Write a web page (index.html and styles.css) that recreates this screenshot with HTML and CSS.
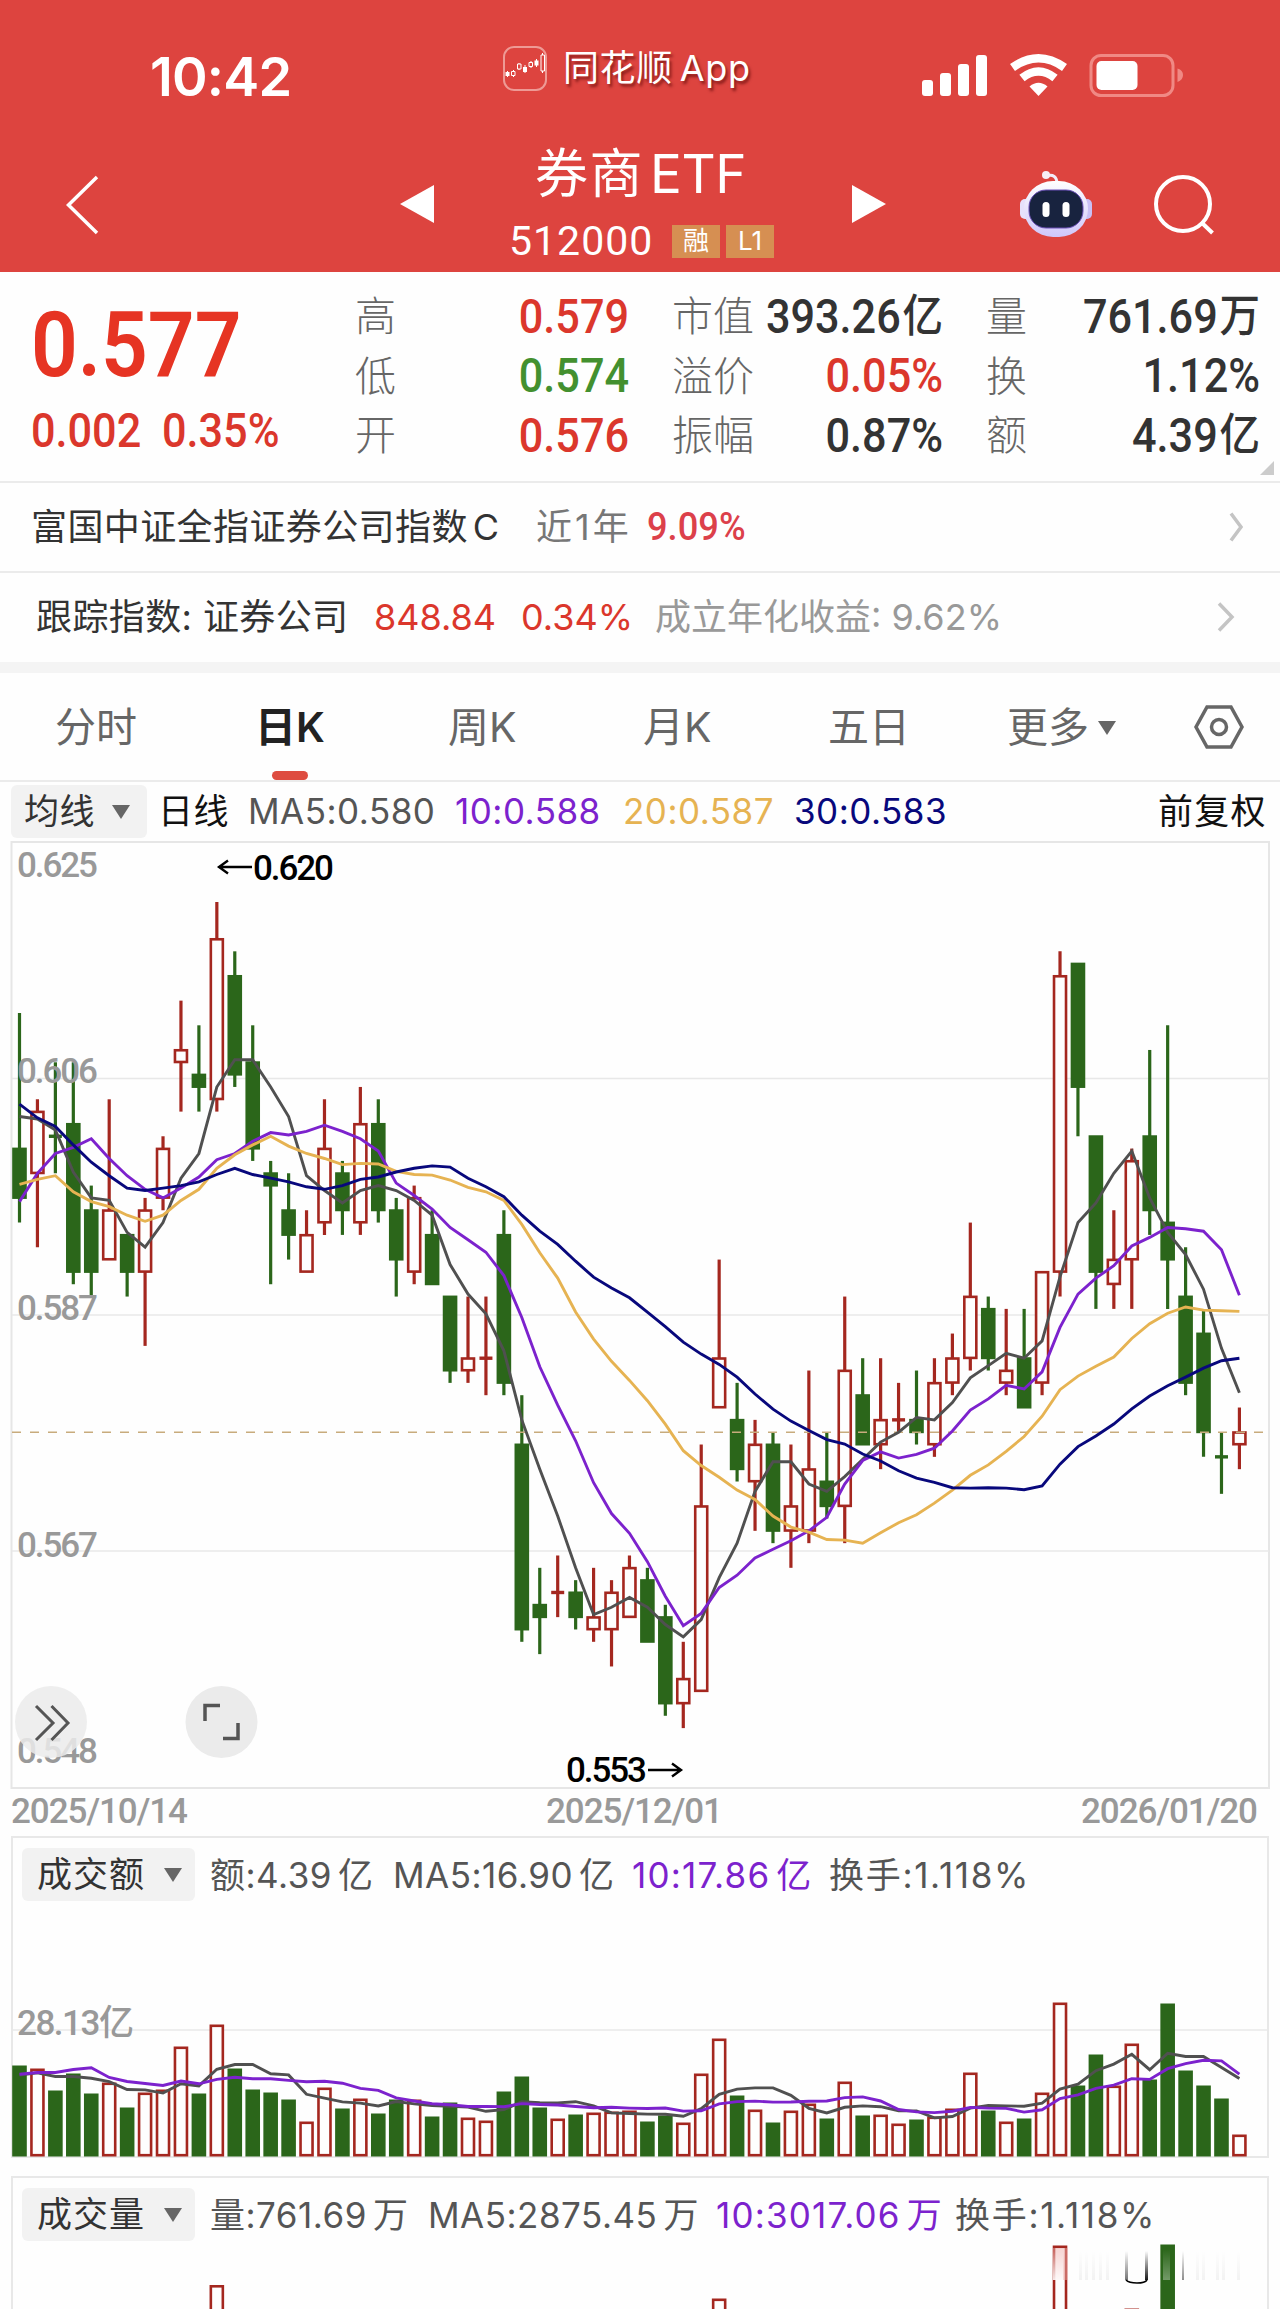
FILE: index.html
```html
<!DOCTYPE html>
<html lang="zh-CN">
<head>
    <meta charset="UTF-8">
    <meta name="viewport" content="width=device-width, initial-scale=1.0">
    <title>券商ETF 512000</title>
    <link rel="stylesheet" href="styles.css">
</head>
<body>
    <header class="header">
        <div class="status-bar">
            <div class="time">10:42</div>
            <div class="app-tag">
                <svg class="app-logo" viewBox="0 0 44 45">
                    <rect x="1" y="1" width="42" height="43" rx="10" fill="none" stroke="#ee9a95" stroke-width="2"/>
                    <path d="M4.500 25v6M10.500 24v7M16 17v7M22 19v8M28 15v7M33.500 13v8M39.500 7v20" stroke="#fff" stroke-width="1"/>
                    <path d="M2.500 26h4v4h-4zM20 21h4v5h-4zM31.500 14.500h4v5h-4z" fill="#fff"/>
                    <path d="M8.500 25.500h3.500v4H8.500zM14.500 18h3.500v5h-3.500zM26 16.500h3.500v4H26zM38 9h3.500v16H38z" fill="#dd443f" stroke="#fff" stroke-width="1"/>
                </svg>
                <span>同花顺<b>App</b></span>
            </div>
            <svg class="status-icons" viewBox="0 0 262 46">
                <g fill="#fff">
                    <rect x="0" y="27" width="11" height="16" rx="3"/>
                    <rect x="18" y="20" width="11" height="23" rx="3"/>
                    <rect x="36" y="11" width="11" height="32" rx="3"/>
                    <rect x="54" y="2" width="11" height="41" rx="3"/>
                </g>
                <g fill="none" stroke="#fff" stroke-width="8.500">
                    <path d="M90.500 14.500Q116.500 -4 142.500 14.500"/>
                    <path d="M100 25Q116.500 12 133 25"/>
                </g>
                <path d="M107.500 33.500Q116.500 26 125.500 33.500L116.500 43z" fill="#fff"/>
                <rect x="169" y="2.500" width="82" height="40" rx="10" fill="none" stroke="#f08984" stroke-width="3"/>
                <path d="M255.500 15.500Q261 17 261 22T255.500 29z" fill="#f08984"/>
                <rect x="174.500" y="8" width="41" height="29" rx="5" fill="#fff"/>
            </svg>
        </div>
        <div class="nav-bar">
            <svg class="back" viewBox="0 0 34 60"><path d="M31 2L2.500 30L31 58" fill="none" stroke="#fff" stroke-width="3.500"/></svg>
            <svg class="prev" viewBox="0 0 34 38"><path d="M34 0V38L0 19z" fill="#fff"/></svg>
            <div class="title">
                <div class="name">券商<span>ETF</span></div>
                <div class="code"><span>512000</span><i>融</i><i>L1</i></div>
            </div>
            <svg class="next" viewBox="0 0 34 38"><path d="M0 0V38L34 19z" fill="#fff"/></svg>
            <svg class="robot" viewBox="0 0 72 66">
                <defs>
                    <linearGradient id="shell" x1="0" y1="0" x2="0" y2="1">
                        <stop offset="0" stop-color="#fff"/>
                        <stop offset="1" stop-color="#cfc6fa"/>
                    </linearGradient>
                </defs>
                <path d="M26 5q11-3 11 8" fill="none" stroke="#f3ecf8" stroke-width="3"/>
                <circle cx="26" cy="4" r="4" fill="#f7eef6"/>
                <rect x="0" y="28" width="12" height="20" rx="5" fill="#e6e0fb"/>
                <rect x="60" y="28" width="12" height="20" rx="5" fill="#c9c0f5"/>
                <rect x="4" y="10" width="64" height="56" rx="29" fill="url(#shell)"/>
                <rect x="9" y="19" width="54" height="38" rx="17" fill="#18233f" stroke="#6a4fb8" stroke-width="1"/>
                <rect x="22.500" y="31" width="7" height="15" rx="3.500" fill="#fff"/>
                <rect x="42.500" y="31" width="7" height="15" rx="3.500" fill="#fff"/>
            </svg>
            <svg class="search" viewBox="0 0 61 60"><circle cx="29" cy="29" r="27" fill="none" stroke="#fff" stroke-width="4"/><path d="M47 47L58.500 58" stroke="#fff" stroke-width="4"/></svg>
        </div>
    </header>

    <section class="quote">
        <div class="last">
            <div class="price">0.577</div>
            <div class="change"><span>0.002</span><span>0.35%</span></div>
        </div>
        <div class="stats">
            <label>高</label><b class="up">0.579</b><label>市值</label><b>393.26<em>亿</em></b><label>量</label><b>761.69<em>万</em></b>
            <label>低</label><b class="down">0.574</b><label>溢价</label><b class="up">0.05%</b><label>换</label><b>1.12%</b>
            <label>开</label><b class="up">0.576</b><label>振幅</label><b>0.87%</b><label>额</label><b>4.39<em>亿</em></b>
        </div>
        <div class="corner"></div>
    </section>

    <a class="row row-fund">
        <span class="fund-name">富国中证全指证券公司指数<span class="cls">C</span></span>
        <span class="muted">近1年</span>
        <b class="din">9.09%</b>
        <svg class="arrow" viewBox="0 0 14 30"><path d="M2 1.500L12 15L2 28.500" fill="none" stroke="#c4c4c4" stroke-width="3.500"/></svg>
    </a>
    <a class="row row-index">
        <span class="index-name">跟踪指数: 证券公司</span>
        <span class="red">848.84</span>
        <span class="red">0.34%</span>
        <span class="muted">成立年化收益: 9.62%</span>
        <svg class="arrow" viewBox="0 0 18 30"><path d="M2 1.500L15 15L2 28.500" fill="none" stroke="#c4c4c4" stroke-width="3.500"/></svg>
    </a>

    <nav class="tabs">
        <span>分时</span>
        <span class="active">日K</span>
        <span>周K</span>
        <span>月K</span>
        <span>五日</span>
        <span class="more">更多<i class="caret"></i></span>
        <svg class="setting" viewBox="0 0 50 44"><path d="M13 2H37L48 22L37 42H13L2 22z" fill="none" stroke="#666" stroke-width="3.500"/><circle cx="25" cy="22" r="7.500" fill="none" stroke="#666" stroke-width="3.500"/></svg>
    </nav>

    <div class="legend">
        <span class="pill">均线<i class="caret"></i></span>
        <span class="black">日线</span>
        <span>MA5:0.580</span>
        <span class="ma10">10:0.588</span>
        <span class="ma20">20:0.587</span>
        <span class="ma30">30:0.583</span>
        <span class="black adjust">前复权</span>
    </div>
    <svg class="kline" id="kline" viewBox="0 840 1280 996"></svg>

    <section class="panel panel-amount">
        <div class="panel-head">
            <span class="pill">成交额<i class="caret"></i></span>
            <span>额:4.39<em>亿</em></span>
            <span>MA5:16.90<em>亿</em></span>
            <span class="ma10">10:17.86<em>亿</em></span>
            <span class="turnover">换手:1.118%</span>
        </div>
        <svg id="amount" viewBox="13 1902 1254 254"></svg>
    </section>

    <section class="panel panel-volume">
        <div class="panel-head">
            <span class="pill">成交量<i class="caret"></i></span>
            <span>量:761.69<em>万</em></span>
            <span>MA5:2875.45<em>万</em></span>
            <span class="ma10">10:3017.06<em>万</em></span>
            <span class="turnover">换手:1.118%</span>
        </div>
        <svg id="volume" viewBox="13 2241 1254 68"></svg>
    </section>

    <script src="chart.js"></script>
</body>
</html>
```
FILE: styles.css
```css
* {
    box-sizing: border-box;
}
body {
    margin: 0;
    width: 1280px;
    height: 2309px;
    overflow: hidden;
    background: #fefefe;
    color: #333;
    font-family: Inter, "Noto Sans CJK SC", sans-serif;
    font-size: 36px;
    line-height: 1;
}
svg {
    display: block;
    flex: none;
}
b, em, i {
    font-style: normal;
    font-weight: inherit;
}

/* header */
.header {
    height: 272px;
    background: #dd443f;
    color: #fff;
}
.status-bar {
    display: flex;
    align-items: center;
    height: 152px;
    padding-left: 150px;
}
.time {
    width: 353px;
    padding-top: 1px;
    font-size: 54px;
    font-weight: 600;
    letter-spacing: -0.800px;
}
.app-tag {
    display: flex;
    align-items: center;
    width: 419px;
    gap: 16px;
    margin-top: -16px;
    font-size: 36px;
    letter-spacing: 0.600px;
    text-shadow: 2px 3px 3px rgba(80, 0, 0, 0.6);
}
.app-tag b {
    margin-left: 7px;
}
.app-logo {
    width: 44px;
    height: 45px;
}
.status-icons {
    width: 262px;
    height: 46px;
}
.nav-bar {
    display: flex;
    height: 120px;
    padding-left: 66px;
}
.back {
    width: 34px;
    height: 60px;
    margin: 23px 300px 0 0;
}
.prev, .next {
    width: 34px;
    height: 38px;
    margin-top: 33px;
}
.title {
    width: 418px;
    text-align: center;
}
.name {
    height: 50px;
    margin-top: -3px;
    padding-right: 5px;
    font-size: 53px;
    line-height: 50px;
    letter-spacing: 1.500px;
    white-space: nowrap;
}
.name span {
    margin-left: 6px;
    letter-spacing: -0.500px;
}
.code {
    display: flex;
    align-items: center;
    height: 34px;
    margin-top: 25px;
    padding-left: 75px;
    font-family: Roboto, sans-serif;
    font-size: 41px;
}
.code span {
    width: 163px;
    text-align: left;
    letter-spacing: 1px;
}
.code i {
    width: 48px;
    height: 33px;
    margin-right: 6px;
    background: #d68f52;
    font-family: Inter, "Noto Sans CJK SC", sans-serif;
    font-size: 26px;
    line-height: 31px;
}
.robot {
    width: 72px;
    height: 66px;
    margin: 19px 62px 0 134px;
}
.search {
    width: 61px;
    height: 60px;
    margin-top: 23px;
}

/* quote */
.quote {
    position: relative;
    display: flex;
    height: 211px;
    border-bottom: 2px solid #ebebeb;
    font-family: Roboto, "Noto Sans CJK SC", sans-serif;
    font-weight: 500;
}
.last {
    width: 355px;
    padding-left: 31px;
    color: #e63423;
}
.price {
    height: 92px;
    margin-top: 27px;
    font-size: 91px;
    font-weight: 600;
    line-height: 92px;
    transform: scaleX(0.9);
    transform-origin: left;
}
.change {
    display: flex;
    margin-top: 16px;
    color: #db372c;
    font-size: 48px;
}
.change span {
    width: 131px;
    transform: scaleX(0.9);
    transform-origin: left;
}
.stats {
    display: grid;
    grid-template-columns: 83px 191px 115px 199px 88px 229px;
    grid-template-rows: repeat(3, 59.500px);
    align-items: center;
    padding-top: 15px;
}
.stats label {
    padding-top: 2px;
    color: #666;
    font-size: 41px;
    font-weight: 300;
    white-space: nowrap;
}
.stats label:nth-child(6n+3), .stats label:nth-child(6n+5) {
    padding-left: 43px;
}
.stats b {
    display: flex;
    align-items: center;
    justify-content: flex-end;
    font-size: 48px;
    white-space: nowrap;
    transform: scaleX(0.9);
    transform-origin: right;
}
.stats em {
    margin-left: 2px;
    font-size: 45px;
}
.up {
    color: #db372c;
}
.down {
    color: #43902f;
}
.corner {
    position: absolute;
    right: 6px;
    bottom: 6px;
    border-left: 14px solid transparent;
    border-bottom: 14px solid #ccc;
}

/* fund / index rows */
.row {
    display: grid;
    align-items: center;
    height: 90px;
    white-space: nowrap;
}
.row-fund {
    grid-template-columns: 505px 111px 582px auto;
    padding-left: 31px;
    border-bottom: 2px solid #ebebeb;
}
.fund-name {
    letter-spacing: 0.400px;
}
.row-fund .muted {
    letter-spacing: 3px;
}
.row-index {
    grid-template-columns: 338px 147px 134px 562px auto;
    height: 89px;
    padding: 0 0 2px 36px;
}
.index-name {
    letter-spacing: 0.400px;
}
.cls {
    margin-left: 5px;
}
.muted {
    color: #777;
}
.row-index .muted {
    color: #999;
}
.red {
    color: #db372c;
}
.din {
    color: #dc404a;
    font-family: Roboto, sans-serif;
    font-size: 39px;
    font-weight: 500;
    transform: scaleX(0.93);
    transform-origin: left;
}
.row-fund .arrow {
    width: 14px;
    height: 30px;
}
.row-index .arrow {
    width: 18px;
    height: 30px;
}

/* tabs */
.tabs {
    display: grid;
    grid-template-columns: 200px 193px 195px 185px 179px 187px auto;
    align-items: center;
    height: 120px;
    padding-left: 55px;
    border-top: 11px solid #f4f4f4;
    border-bottom: 2px solid #ebebeb;
    color: #666;
    font-size: 41px;
}
.tabs span {
    padding-top: 2px;
}
.tabs .active {
    position: relative;
    color: #222;
    font-weight: 600;
}
.tabs .active::after {
    content: "";
    position: absolute;
    left: 17px;
    bottom: -32px;
    width: 36px;
    height: 9px;
    border-radius: 5px;
    background: #de4c40;
}
.caret {
    display: inline-block;
    border: 9px solid transparent;
    border-top: 14px solid #666;
    border-bottom: 0;
}
.more .caret {
    margin-left: 9px;
    vertical-align: 7px;
}
.setting {
    width: 50px;
    height: 44px;
}

/* MA legend */
.legend {
    display: grid;
    grid-template-columns: 147px 90px 207px 168px 171px 364px auto;
    align-items: center;
    height: 59px;
    padding-left: 11px;
    color: #555;
    font-size: 35px;
    letter-spacing: 0.500px;
    white-space: nowrap;
}
.pill {
    display: flex;
    align-items: center;
    justify-content: space-between;
    width: 136px;
    height: 53px;
    padding: 0 17px 0 13px;
    border-radius: 6px;
    background: #f2f2f2;
    color: #333;
}
.black {
    color: #111;
}
.ma10 {
    color: #7c22cd;
}
.ma20 {
    color: #e6b352;
}
.ma30 {
    color: #08087c;
}
.adjust {
    letter-spacing: 1.200px;
}
.kline {
    width: 1280px;
    height: 996px;
    margin-top: -1px;
}

/* sub charts */
.panel {
    margin: 0 11px 18px;
    border: 2px solid #e8e8e8;
}
.panel-head {
    display: grid;
    align-items: center;
    height: 64px;
    padding: 9px 0 0 9px;
    color: #555;
    font-size: 35px;
    letter-spacing: 0.500px;
    white-space: nowrap;
}
.panel-head > span:not(.pill) {
    padding-top: 2px;
}
.panel-head em {
    margin-left: 6px;
}
.panel-head .pill {
    width: 173px;
    padding: 0 13px 0 15px;
    letter-spacing: 1px;
}
.panel-head .ma10 {
    letter-spacing: 1.200px;
}
.panel-head .turnover {
    letter-spacing: 1.700px;
}
.panel-amount .panel-head {
    grid-template-columns: 188px 183px 239px 197px auto;
}
.panel-volume .panel-head {
    grid-template-columns: 188px 218px 288px 239px auto;
}
#amount {
    width: 1254px;
    height: 254px;
    overflow: visible;
}
#volume {
    width: 1254px;
    height: 68px;
}
.axis {
    fill: #999;
    font-family: Roboto, "Noto Sans CJK SC", sans-serif;
    font-size: 35px;
    font-weight: 500;
}
.peak {
    fill: #000;
    font-family: Roboto, sans-serif;
    font-size: 35px;
    font-weight: 500;
}
```
FILE: chart.js
```js
// [open, close, high, low] in 0.001 yuan
const candles = [
    [600,596,611,594],[598,603,604,592],[601,601,607,598],[602,590,607,589],[595,590,597,588],
    [591,595,604,591],[593,590,593,588],[590,595,596,584],[596,600,601,595],[607,608,612,603],
    [606,605,610,603],[604,617,620,603],[614,606,616,605],[607,600,610,599],[598,597,599,589],
    [595,593,598,591],[590,593,595,590],[594,600,604,593],[598,595,599,593],[594,602,605,593],
    [602,595,604,594],[595,591,596,588],[590,596,597,589],[593,589,595,589],[588,582,588,581],
    [582,583,588,581],[583,583,588,580],[593,581,595,580],[576,561,580,560],[563,562,566,559],
    [564,564,567,562],[564,562,565,561],[561,562,566,560],[561,564,565,558],[562,566,567,562],
    [565,560,566,560],[562,555,563,554],[555,557,560,553],[556,571,576,556],[579,583,591,579],
    [578,574,581,573],[573,576,578,569],[576,569,577,568],[569,571,576,566],[569,574,582,568],
    [573,571,577,570],[571,582,588,568],[580,576,583,576],[576,578,583,574],[578,578,581,577],
    [578,577,582,576],[576,581,583,575],[581,583,585,580],[583,588,594,582],[587,583,588,582],
    [581,582,587,580],[583,579,587,579],[581,590,590,580],[590,614,616,588],[615,605,615,601],
    [601,590,601,587],[589,591,595,587],[591,599,600,587],[601,595,608,593],[594,591,610,587],
    [588,581,592,580],[585,577,587,575],[575,575,577,572],[576,577,579,574]
];
const dojiDown = [2, 67];

// turnover, bar heights
const amounts = [
    91,88,66,83,63,74,49,64,67,110,63,132,88,67,64,57,35,69,48,58,43,57,57,40,54,39,36,65,80,49,
    38,42,44,45,46,35,41,34,83,118,61,47,34,46,53,38,75,41,42,33,37,40,48,84,46,35,38,64,154,71,
    102,71,113,77,153,86,71,58,22
];

// averages for the days before enough history is loaded
const seed5 = [602.6, 602.4, 601.5, 598.1];
const seed10 = [595.7, 598, 599.6, 600.1, 600.8, 599.2, 597.8, 596.7, 596];
const seed20 = [597.1, 597.5, 597.8, 596.5, 595.7, 595.3, 594.6, 594.1, 594.6, 595.8, 596.7,
    598.4, 599.5, 600.3, 601, 600.2, 599.6, 599.2, 598.7];
const seed30 = [603.6, 602.5, 601.8, 600.3, 598.9, 597.8, 596.8, 596.6, 596.8, 597, 597.3, 597.9,
    598.4, 597.9, 597.6, 597.3, 596.9, 596.7, 597, 597.5, 597.7, 598.1, 598.4, 598.6, 598.5,
    597.6, 596.9, 596.1, 594.6];

const RED = '#a4271f';
const GREEN = '#2b661a';
const cx = i => 19.5 + i * 17.94;
const py = p => 902 + (620 - p) * 12.33;

function average(values, n, seed) {
    return values.map((v, i) => {
        if (i < n - 1) return seed[i];
        return values.slice(i - n + 1, i + 1).reduce((a, b) => a + b, 0) / n;
    });
}

function line(values, y, color) {
    const points = values.map((v, i) => cx(i).toFixed(1) + ',' + y(v).toFixed(1)).join(' ');
    return `<polyline points="${points}" fill="none" stroke="${color}" stroke-width="2.9"/>`;
}

function isDown(i) {
    return candles[i][1] < candles[i][0] || dojiDown.includes(i);
}

function bar(i, top, bottom) {
    const x = cx(i) - 7.3;
    if (isDown(i)) {
        return `<rect x="${x}" y="${top}" width="14.6" height="${bottom - top}" fill="${GREEN}"/>`;
    }
    return `<rect x="${x + 1.3}" y="${top + 1.3}" width="12" height="${bottom - top - 2.6}" fill="#fefefe" stroke="${RED}" stroke-width="2.6"/>`;
}

function drawKline() {
    let s = '<rect x="11.500" y="842" width="1257.500" height="946" fill="none" stroke="#e6e6e6" stroke-width="2"/>';
    [1078.500, 1315, 1551].forEach(y => {
        s += `<path d="M12 ${y}H1269" stroke="#e8e8e8" stroke-width="1.500"/>`;
    });
    candles.forEach(([o, c, h, l], i) => {
        const color = isDown(i) ? GREEN : RED;
        s += `<path d="M${cx(i)} ${py(h)}V${py(l)}" stroke="${color}" stroke-width="3.2"/>`;
        if (o === c) {
            s += `<path d="M${cx(i) - 6.500} ${py(o)}h13" stroke="${color}" stroke-width="3.4"/>`;
        } else {
            s += bar(i, py(Math.max(o, c)) - 1, py(Math.min(o, c)) + 1);
        }
    });
    s += `<path d="M12 ${py(577)}H1269" stroke="#c8ab7c" stroke-width="1.500" stroke-dasharray="9 9"/>`;
    const closes = candles.map(c => c[1]);
    s += line(average(closes, 5, seed5), py, '#505050');
    s += line(average(closes, 10, seed10), py, '#7c22cd');
    s += line(average(closes, 20, seed20), py, '#e6b352');
    s += line(average(closes, 30, seed30), py, '#08087c');

    [['0.625', 877], ['0.606', 1083], ['0.587', 1320], ['0.567', 1557], ['0.548', 1763]].forEach(([t, y]) => {
        s += `<text class="axis" x="17" y="${y}" textLength="81">${t}</text>`;
    });
    s += '<path d="M252 867H219M228 860.500L219 867L228 873.500" fill="none" stroke="#000" stroke-width="2.400"/>';
    s += '<text class="peak" x="253" y="880" textLength="81">0.620</text>';
    s += '<path d="M648 1770H681M672 1763.500L681 1770L672 1776.500" fill="none" stroke="#000" stroke-width="2.400"/>';
    s += '<text class="peak" x="566" y="1782" textLength="81">0.553</text>';

    s += '<circle cx="51" cy="1722" r="36" fill="#ebebeb" fill-opacity="0.850"/>';
    s += '<path d="M36 1706L53 1723L36 1740M51.500 1706L68 1723L51.500 1740" fill="none" stroke="#555" stroke-width="3"/>';
    s += '<circle cx="221.500" cy="1722" r="36" fill="#ebebeb"/>';
    s += '<path d="M205 1721V1705.500H220M223 1738.500H238V1723" fill="none" stroke="#555" stroke-width="3.500"/>';

    s += '<text class="axis" x="11" y="1823" textLength="177">2025/10/14</text>';
    s += '<text class="axis" x="546" y="1823" textLength="177">2025/12/01</text>';
    s += '<text class="axis" x="1081" y="1823" textLength="177">2026/01/20</text>';
    document.getElementById('kline').innerHTML = s;
}

function drawAmount() {
    const y = v => 2156.500 - v;
    let s = '<path d="M13 2030H1267" stroke="#e8e8e8" stroke-width="1.500"/>';
    s += '<text class="axis" x="17" y="2035" textLength="117">28.13亿</text>';
    amounts.forEach((v, i) => {
        s += bar(i, y(v), 2156.500);
    });
    s += line(average(amounts, 5, [81.5, 83.6, 80, 80]), y, '#505050');
    s += line(average(amounts, 10, [82.3, 84, 84, 87, 88.7, 79, 75, 73, 71]), y, '#7c22cd');
    document.getElementById('amount').innerHTML = s;
}

function drawVolume() {
    // only the tallest bars reach above the fold
    let s = '';
    [[11, 2284], [39, 2297.5], [58, 2244.5], [62, 2307.5], [64, 2243.5]].forEach(([i, top]) => {
        s += bar(i, top, 2400);
    });
    s += `<defs>
        <linearGradient id="fade" x1="0" y1="0" x2="0" y2="1">
            <stop offset="0" stop-color="#fff" stop-opacity="0"/>
            <stop offset="1" stop-color="#fff" stop-opacity="0.850"/>
        </linearGradient>
        <linearGradient id="smear" x1="0" y1="0" x2="0" y2="1">
            <stop offset="0" stop-color="#000" stop-opacity="0"/>
            <stop offset="1" stop-color="#000" stop-opacity="0.900"/>
        </linearGradient>
    </defs>`;
    s += '<rect x="1053" y="2247" width="15" height="32" fill="#f0b0ac" fill-opacity="0.500"/>';
    s += '<rect x="1053" y="2250" width="10" height="29" fill="url(#fade)"/>';
    [1079, 1085, 1092, 1099, 1106, 1196, 1202, 1216, 1222, 1237].forEach(x => {
        s += `<rect x="${x}" y="2250" width="3" height="29" fill="url(#smear)" opacity="0.050"/>`;
    });
    s += '<rect x="1125" y="2250" width="3" height="29" fill="url(#smear)" opacity="0.600"/>';
    s += '<rect x="1145" y="2250" width="3" height="29" fill="url(#smear)"/>';
    s += '<path d="M1126 2279Q1129 2282 1137 2282T1147 2279" fill="none" stroke="#000" stroke-width="1.600"/>';
    s += '<rect x="1163" y="2248" width="7" height="31" fill="url(#fade)" opacity="0.400"/>';
    s += '<rect x="1182" y="2250" width="2" height="29" fill="url(#smear)" opacity="0.500"/>';
    document.getElementById('volume').innerHTML = s;
}

drawKline();
drawAmount();
drawVolume();
```
